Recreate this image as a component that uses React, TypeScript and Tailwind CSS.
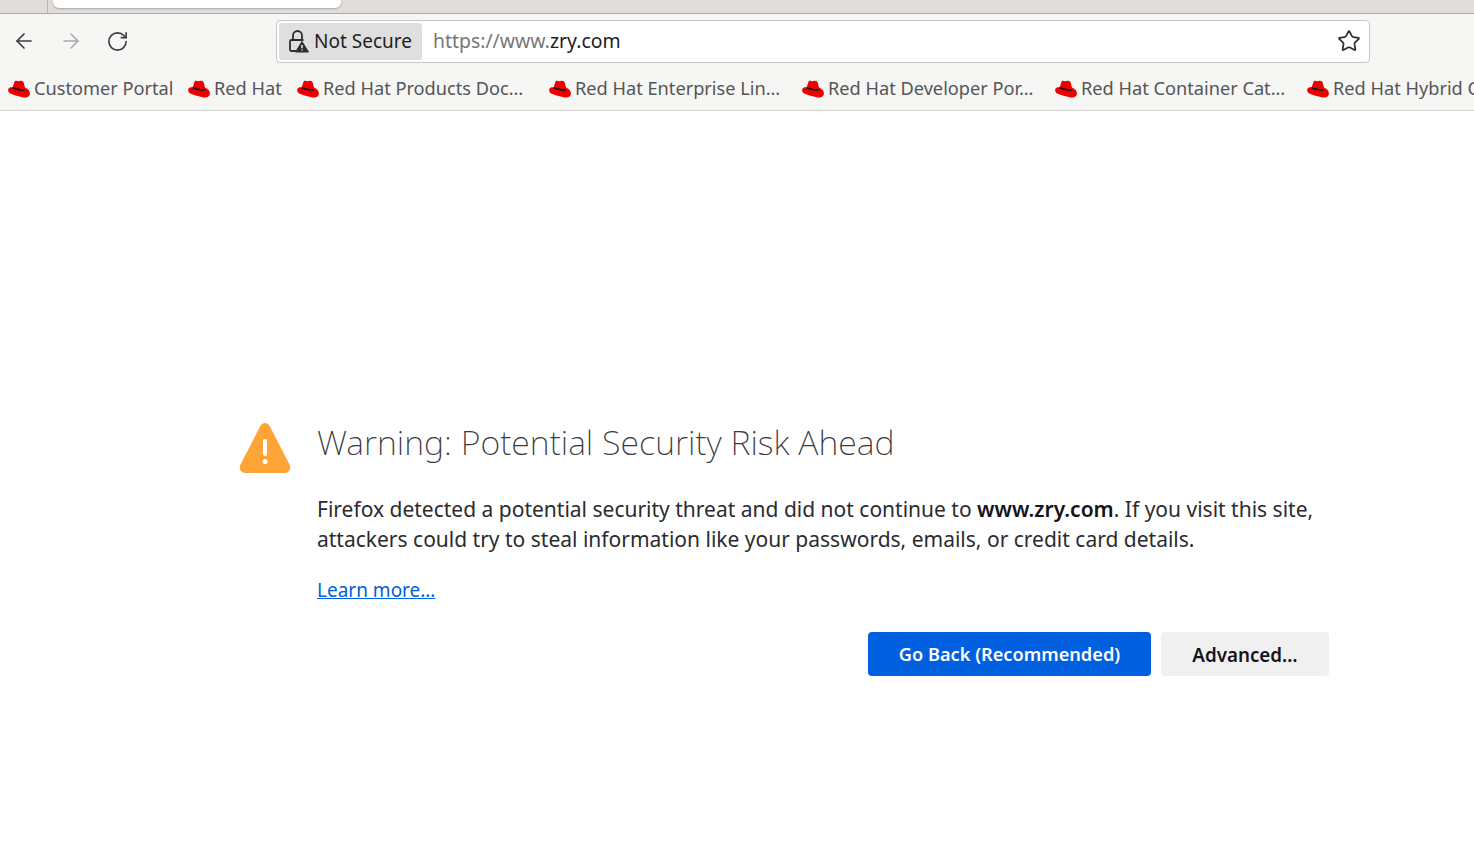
import { ArrowLeft, ArrowRight, RotateCw, Star } from 'lucide-react';

const RedHatIcon = () => (
  <svg viewBox="0 0 22 18" className="w-[22px] h-[18px] shrink-0">
    <path
      d="M6.6 1.4C8 .2 9.6 1.4 11 1.2C13.2 .3 15.4 .8 16 3.4L16.9 7.4C19.6 8.4 21.9 10.4 21.9 13.2C21.9 16.6 18.8 17.9 15.4 17.4C10.5 16.6 6 15 2.8 13.8C.8 13 -.3 11.2 .3 9.2C.9 7.4 2.8 7 4.6 7.4Z"
      fill="#ee0000"
    />
    <path d="M4.2 8.4C7.8 9.6 12.5 11 16.9 10.9L16.6 9.3C12.5 9.3 8 8 4.5 6.9Z" fill="#1a1a1a" />
  </svg>
);

const LockWarnIcon = () => (
  <svg viewBox="0 0 22 24" className="w-[22px] h-6 shrink-0" fill="none">
    <path d="M6 11V6.5a4.5 4.5 0 0 1 9 0V11" stroke="#2e2e2e" strokeWidth="1.8" />
    <path d="M10 22H4.5A1.5 1.5 0 0 1 3 20.5V12.5A1.5 1.5 0 0 1 4.5 11H16.5" stroke="#2e2e2e" strokeWidth="1.8" />
    <path d="M15 12.5 21.5 23H8.5Z" fill="#2e2e2e" stroke="#2e2e2e" strokeLinejoin="round" />
    <path d="M15 16v3.2M15 20.4v1" stroke="#fff" strokeWidth="1.4" />
  </svg>
);

const WarningIcon = () => (
  <svg viewBox="0 0 52 52" className="w-[52px] h-[52px] shrink-0">
    <path
      d="M21.6 3.5C23.6 0 28.4 0 30.4 3.5L50.5 42.5C52.6 46.6 50 51 45.5 51H6.5C2 51 -.6 46.6 1.5 42.5Z"
      fill="#ffa436"
    />
    <rect x="24" y="17" width="4" height="17" rx="2" fill="#fff" />
    <circle cx="26" cy="39.5" r="2.5" fill="#fff" />
  </svg>
);

const bookmarks = [
  { label: 'Customer Portal', className: 'w-[165px] mr-[15px]' },
  { label: 'Red Hat', className: 'w-[94px] mr-[15px]' },
  { label: 'Red Hat Products Doc…', className: 'w-[229px] mr-[23px]' },
  { label: 'Red Hat Enterprise Lin…', className: 'w-[233px] mr-[20px]' },
  { label: 'Red Hat Developer Por…', className: 'w-[236px] mr-[17px]' },
  { label: 'Red Hat Container Cat…', className: 'w-[232px] mr-[20px]' },
  { label: 'Red Hat Hybrid Cloud', className: 'w-[300px]' },
];

export default function App() {
  return (
    <div className="h-[865px] w-[1474px] overflow-hidden bg-white font-['Noto_Sans',sans-serif]">
      {/* tab strip */}
      <div className="h-[14px] bg-[#dfdcd9] border-b border-[#aeaaa6] flex">
        <div className="w-[48px] h-[13px] border-r border-[#b8b4b0]" />
        <div className="ml-[5px] w-[288px] h-2 bg-white rounded-b-md shadow-[0_1px_2px_rgba(0,0,0,0.25)]" />
      </div>

      {/* toolbar */}
      <div className="h-[54px] bg-[#f6f6f5] flex items-center">
        <div className="w-[276px] pl-[12px] flex items-center gap-[23px]">
          <ArrowLeft className="w-6 h-6 text-[#3d3d3d]" strokeWidth={1.7} />
          <ArrowRight className="w-6 h-6 text-[#a8a8a8]" strokeWidth={1.5} />
          <RotateCw className="w-[23px] h-[23px] text-[#3d3d3d]" strokeWidth={1.7} />
        </div>
        <div className="w-[1094px] h-[43px] bg-white border border-[#c9c6c3] rounded-[4px] flex items-center pl-[2px] pr-[8px]">
          <div className="h-[37px] w-[143px] bg-[#dfdfdf] rounded-[3px] flex items-center pl-[8px] gap-[5px] text-[#222] text-[19px]">
            <LockWarnIcon />
            <span>Not Secure</span>
          </div>
          <div className="ml-[11px] text-[19.4px] text-[#777]">
            https://www.<span className="text-[#222]">zry.com</span>
          </div>
          <Star className="ml-auto w-6 h-6 text-[#2e2e2e]" strokeWidth={1.7} />
        </div>
      </div>

      {/* bookmarks */}
      <div className="h-[43px] bg-[#f6f6f5] border-b border-[#d5d3d1] flex items-center pl-[8px] overflow-hidden">
        {bookmarks.map((b) => (
          <div key={b.label} className={`flex items-center gap-[4px] shrink-0 ${b.className}`}>
            <RedHatIcon />
            <span className="text-[18.2px] text-[#555] whitespace-nowrap">{b.label}</span>
          </div>
        ))}
      </div>

      {/* error page */}
      <main className="pt-[311px] pl-[239px] pr-[145px] flex gap-[26px]">
        <WarningIcon />
        <div className="flex-1">
          <h1 className="text-[34px] font-extralight leading-[41px] text-[#3a3a3f]">
            Warning: Potential Security Risk Ahead
          </h1>
          <p className="mt-[31px] text-[21px] leading-[30px] text-[#2b2b30]">
            Firefox detected a potential security threat and did not continue to{' '}
            <strong className="font-semibold text-[#15141a]">www.zry.com</strong>. If you visit this site,
            <br />
            attackers could try to steal information like your passwords, emails, or credit card details.
          </p>
          <a className="block mt-[22px] text-[19px] leading-[28px] text-[#0060df] underline w-fit">Learn more…</a>
          <div className="mt-[28px] flex justify-end gap-[10px]">
            <button className="w-[283px] h-[44px] pt-[2px] bg-[#0060df] rounded-[4px] text-white text-[18.2px] font-semibold">
              Go Back (Recommended)
            </button>
            <button className="w-[168px] h-[44px] pt-[2px] bg-[#f0f0f0] rounded-[4px] text-[#15141a] text-[18.8px] font-semibold">
              Advanced…
            </button>
          </div>
        </div>
      </main>
    </div>
  );
}
